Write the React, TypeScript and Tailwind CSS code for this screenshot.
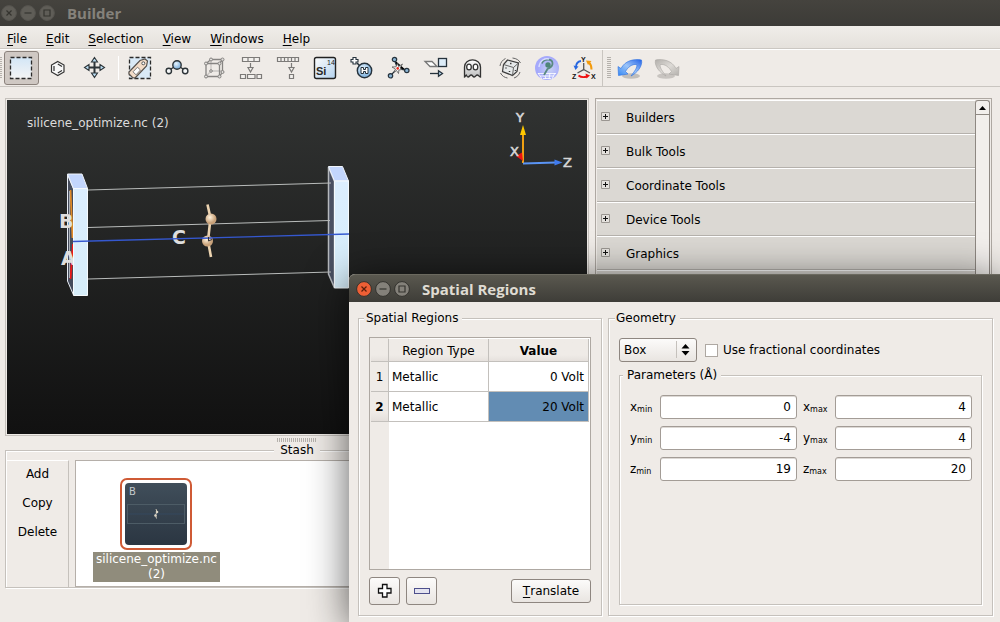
import React from 'react'

type ToolItem = {
    name: string
    icon: React.ReactNode
    active?: boolean
}

type RegionRow = {
    type: string
    value: string
    selected?: boolean
}

const menus = ['File', 'Edit', 'Selection', 'View', 'Windows', 'Help']

const panels = ['Builders', 'Bulk Tools', 'Coordinate Tools', 'Device Tools', 'Graphics', 'Miscellaneous']

const regions: RegionRow[] = [
    { type: 'Metallic', value: '0 Volt' },
    { type: 'Metallic', value: '20 Volt', selected: true },
]

const parameters = [
    { axis: 'x', min: '0', max: '4' },
    { axis: 'y', min: '-4', max: '4' },
    { axis: 'z', min: '19', max: '20' },
]

const selectTools: ToolItem[] = [
    {
        name: 'Rectangle select',
        active: true,
        icon: <rect x="2.500" y="2.500" width="21" height="21" fill="url(#paper)" stroke="#2a2a2a" strokeWidth="1.300" strokeDasharray="4 2" />,
    },
    {
        name: 'Ring select',
        icon: <g fill="none" stroke="#333" strokeWidth="1.200">
            <path d="M12.800 6.500 L19 10 V17 L12.800 20.500 L6.500 17 V10 Z" fill="#f8f8f8" />
            <path d="M9 11 V16 M12.800 9 L17 11.400 M12.800 18 L17 15.600" />
        </g>,
    },
    {
        name: 'Move',
        icon: <g stroke="#2d3438" strokeWidth="1.400" fill="#b9dcf2">
            <path d="M5 12.500 H21 M12.500 5 V21" strokeWidth="2" />
            <path d="M12.500 2.500 L15.500 7 H9.500 Z M12.500 22.500 L15.500 18 H9.500 Z M2.500 12.500 L7 9.500 V15.500 Z M22.500 12.500 L18 9.500 V15.500 Z" strokeWidth="1.100" />
        </g>,
    },
]

const editTools: ToolItem[] = [
    {
        name: 'Tag selection',
        icon: <g>
            <rect x="2.500" y="2.500" width="21" height="21" fill="#d9e9f6" stroke="#2a2a2a" strokeWidth="1.300" strokeDasharray="4 2" />
            <path d="M2 17 L13 5.500 L18 4 L20.500 6 L19.500 11 L8 23 L5.500 22.500 L2 19 Z" fill="#f3dcc8" stroke="#55504c" strokeWidth="1.200" />
            <path d="M6 16.800 L10.500 12.200 L13.500 15 L9 19.800 Z" fill="#fff" stroke="#777" />
            <circle cx="16.300" cy="8.300" r="1.500" fill="#fff" stroke="#555" />
        </g>,
    },
    {
        name: 'Bond angle',
        icon: <g stroke="#2d3438" strokeWidth="1.400">
            <path d="M7 14 L10 12 M19 14 L16 12" />
            <circle cx="4.800" cy="16" r="2.700" fill="#f4f6f7" />
            <circle cx="21.200" cy="16" r="2.700" fill="#f4f6f7" />
            <circle cx="13" cy="10" r="4.200" fill="url(#ball)" />
        </g>,
    },
    {
        name: 'Unit cell',
        icon: <g stroke="#868482" strokeWidth="1.300" fill="none">
            <path d="M10 4.500 V16 H21.500 M10 16 L5 21.500" stroke="#c9c6c3" />
            <path d="M10 4.500 H21.500 V17 L18.500 21.500 H5 V8.500 L10 4.500 M5 8.500 H18.500 V21.500 M18.500 8.500 L21.500 4.500" />
            <g fill="#e2e0dd" strokeWidth="1">
                <circle cx="10" cy="4.500" r="1.500" />
                <circle cx="21.500" cy="4.500" r="1.500" />
                <circle cx="21.500" cy="17" r="1.500" />
                <circle cx="5" cy="8.500" r="1.500" />
                <circle cx="18.500" cy="8.500" r="1.500" />
                <circle cx="5" cy="21.500" r="1.500" />
                <circle cx="18.500" cy="21.500" r="1.500" />
                <circle cx="10" cy="16" r="1.300" />
            </g>
        </g>,
    },
    {
        name: 'Split bulk',
        icon: <path d="M4.500 2.500 H21.500 V6.500 H4.500 Z M10 2.500 V6.500 M16 2.500 V6.500 M2.500 19.500 H7.500 V23.500 H2.500 Z M9.500 19.500 H17 V23.500 H9.500 Z M19 19.500 H23.500 V23.500 H19 Z M12.500 8 V12.500 M10 12.500 H15 L12.500 17 Z" stroke="#7c7a78" strokeWidth="1.200" fill="#f2f0ed" />,
    },
    {
        name: 'Reduce cell',
        icon: <path d="M2.500 2.500 H23.500 V6.500 H2.500 Z M6 2.500 V6.500 M9.500 2.500 V6.500 M13 2.500 V6.500 M16.500 2.500 V6.500 M20 2.500 V6.500 M16.500 8 V12.500 M14 12.500 H19 L16.500 17 Z M14.500 19.500 H18.500 V23.500 H14.500 Z" stroke="#7c7a78" strokeWidth="1.200" fill="#f2f0ed" />,
    },
    {
        name: 'Element',
        icon: <g className="font-['Liberation_Sans',sans-serif]">
            <rect x="2.500" y="2.500" width="21" height="21" rx="2" fill="url(#tile)" stroke="#222" strokeWidth="1.400" />
            <text x="4" y="20" fontSize="11" fontWeight="700" fill="#2a2a2a">Si</text>
            <text x="15" y="10" fontSize="7" fill="#222">14</text>
        </g>,
    },
    {
        name: 'Add hydrogen',
        icon: <g stroke="#26323c">
            <path d="M8 8 L11 11" strokeWidth="1.600" />
            <circle cx="15.500" cy="15.500" r="7.200" fill="url(#ball)" strokeWidth="1.400" />
            <path d="M4 2.500 H7 V4.500 H9 V7 H7 V9 H4 V7 H2 V4.500 H4 Z" fill="#fff" strokeWidth="1.100" />
            <path d="M12 12.500 H14.500 V14.500 H16.500 V12.500 H19 V18.500 H16.500 V16.500 H14.500 V18.500 H12 Z" fill="#fff" strokeWidth="1" />
        </g>,
    },
    {
        name: 'Fuse atoms',
        icon: <g stroke="#26323c">
            <path d="M8.500 5 L11.500 13.500 L20.500 15.500 M11.500 13.500 L4.500 20.500" strokeWidth="1.200" />
            <path d="M11.500 8.500 L12.600 11.500 L16.500 9 L14 13 L16 14.500 L12.900 15 L12.500 18.500 L10.600 15.500 L8 17 L9.500 14 L6 12 L10 11.800 Z" fill="#fff" stroke="#555" strokeWidth=".8" />
            <circle cx="11.700" cy="13.400" r="1.300" fill="#e8291c" stroke="none" />
            <circle cx="8.500" cy="4.500" r="2.200" fill="#8ab4d4" strokeWidth="1.200" />
            <circle cx="20.800" cy="15.500" r="2.200" fill="#8ab4d4" strokeWidth="1.200" />
            <circle cx="4.500" cy="20.800" r="2.200" fill="#8ab4d4" strokeWidth="1.200" />
        </g>,
    },
    {
        name: 'Transform cell',
        icon: <g stroke="#26323c" strokeWidth="1.300">
            <path d="M2 6.500 H9 L14 11.500 H7 Z" fill="#fff" stroke="#777" />
            <rect x="15.500" y="3.500" width="8" height="8" fill="#dcecf8" />
            <path d="M7 18.500 H16" />
            <path d="M15.500 15.700 L19.500 18.500 L15.500 21.300 Z" fill="#b9dcf2" />
        </g>,
    },
    {
        name: 'Ghost atoms',
        icon: <g stroke="#333" strokeWidth="1.300">
            <path d="M4.500 22 V12 C4.500 2.500 20.500 2.500 20.500 12 V22 C18.800 22 18.800 20 17.300 20 C15.800 20 15.800 22 14.200 22 C12.700 22 12.700 20 11.200 20 C9.600 20 9.600 22 8 22 C6.500 22 6.800 20 6.200 20 C5.300 20.500 5.500 22 4.500 22 Z" fill="url(#ghost)" />
            <ellipse cx="9" cy="12" rx="2.300" ry="2.900" fill="#fff" />
            <ellipse cx="15.500" cy="12" rx="2.300" ry="2.900" fill="#fff" />
        </g>,
    },
    {
        name: 'Rattle',
        icon: <g stroke="#3c3c3c" strokeWidth="1.200" fill="none">
            <path d="M10.500 5 L21.500 8 L20 16.500 L15.500 20.500 L5.500 16.500 L6.500 9.500 Z" fill="#e6e9ea" />
            <path d="M6.500 9.500 L16.500 12.500 L21.500 8 M16.500 12.500 L15.500 20.500" stroke="#666" strokeWidth="1" />
            <path d="M3 11 C3.500 7.500 5.500 5 8.500 3.500 M3.500 18 C5 21 7.500 22.500 10.500 23 M17 23 C20 22 22 20 23 17 M15.500 3 C19.500 3.500 22 5 23.500 8" stroke="#666" strokeWidth="1" />
            <path d="M9 12.500 v1 M12.500 16 v1 M18.500 15 v1 M13 8.500 h1.500" strokeWidth="1.500" />
        </g>,
    },
    {
        name: 'Symmetry',
        icon: <g>
            <circle cx="13" cy="13" r="12" fill="url(#lilac)" />
            <path d="M4 18.500 H22 M6 21 H20 M9 23.500 H17 M4 18 L8 24 M10 18 L12 24 M16 18 L15 24 M21 18 L18 24" stroke="#fff" strokeWidth=".8" />
            <path d="M8 8.500 C9 4 18 3 18.500 8 C19 12 15 13 13.500 14 L10 20" fill="none" stroke="#5b8a82" strokeWidth="1.800" />
            <circle cx="14" cy="10" r="2.700" fill="#4f8578" />
            <path d="M5 12 C6 5 11 3 15 4" fill="none" stroke="#d8dcff" strokeWidth="1.500" />
        </g>,
    },
    {
        name: 'Swap axes',
        icon: <g fill="none" strokeWidth="1.500">
            <path d="M12.700 8 V14.500 L6.500 18 M12.700 14.500 L19 18" stroke="#555" strokeWidth="1.300" />
            <path d="M10 6 C7 6.500 5 8.500 5 12" stroke="#2767e0" strokeWidth="1.800" />
            <path d="M2.500 10.500 L7.500 11.500 L4.500 15 Z" fill="#2767e0" />
            <path d="M20.500 14.500 C20.500 11 19.500 9 18 7.500" stroke="#f39a0b" strokeWidth="2" />
            <path d="M15 5.500 L20.500 6 L17 10 Z" fill="#f39a0b" />
            <path d="M7.500 20.500 C10 22.500 13 22.500 16 21.500" stroke="#ee1111" strokeWidth="1.900" />
            <path d="M14.500 18.500 L19 20.500 L15.500 23.500 Z" fill="#ee1111" />
            <g className="font-['Liberation_Sans',sans-serif]" fill="#111" fontSize="7" fontWeight="700">
                <text x="10" y="7">Y</text>
                <text x="1" y="24">Z</text>
                <text x="20" y="24">X</text>
            </g>
        </g>,
    },
]

const historyTools: ToolItem[] = [
    {
        name: 'Undo',
        icon: <g>
            <ellipse cx="14" cy="21" rx="9" ry="2.800" fill="#6d6a66" opacity=".35" />
            <path d="M1 11.500 L4 13.500 C8 6 16 3.500 24.500 5 C26 11 20 18 14 21 C17 17 21 12 19.500 9.500 C15 9 11 12 8.500 16.500 L11 19 L1.500 20.500 Z" fill="url(#undo)" stroke="#2a6fe0" strokeWidth=".6" />
        </g>,
    },
    {
        name: 'Redo',
        icon: <g>
            <ellipse cx="12" cy="21" rx="9" ry="2.800" fill="#6d6a66" opacity=".3" />
            <path d="M25 11.500 L22 13.500 C18 6 10 3.500 1.500 5 C0 11 6 18 12 21 C9 17 5 12 6.500 9.500 C11 9 15 12 17.500 16.500 L15 19 L24.500 20.500 Z" fill="url(#redo)" stroke="#a9a6a2" strokeWidth=".6" />
        </g>,
    },
]

function Gradients() {
    return (
        <svg className="absolute h-0 w-0" aria-hidden="true">
            <defs>
                <linearGradient id="paper" x1="0" y1="0" x2="0" y2="1"><stop stopColor="#d3e6f6" /><stop offset="1" stopColor="#f4f4f4" /></linearGradient>
                <linearGradient id="tile" x1="0" y1="0" x2="1" y2="1"><stop stopColor="#fdfdfd" /><stop offset="1" stopColor="#b4d2ee" /></linearGradient>
                <linearGradient id="ghost" x1="0" y1="0" x2="0" y2="1"><stop stopColor="#fff" /><stop offset="1" stopColor="#bdbdbd" /></linearGradient>
                <linearGradient id="undo" x1="1" y1="0" x2="0" y2="1"><stop stopColor="#2463e8" /><stop offset=".5" stopColor="#9cc4f8" /><stop offset="1" stopColor="#2f86f5" /></linearGradient>
                <linearGradient id="redo" x1="0" y1="0" x2="1" y2="1"><stop stopColor="#b2afab" /><stop offset=".5" stopColor="#dddad6" /><stop offset="1" stopColor="#b2afab" /></linearGradient>
                <radialGradient id="ball" cx=".4" cy=".35"><stop stopColor="#e8f4fd" /><stop offset="1" stopColor="#8ebbe2" /></radialGradient>
                <radialGradient id="lilac" cx=".6" cy=".55"><stop stopColor="#c9d3f4" /><stop offset="1" stopColor="#a5a9fb" /></radialGradient>
                <radialGradient id="atom" cx=".4" cy=".35"><stop stopColor="#fff3dd" /><stop offset="1" stopColor="#c9a27a" /></radialGradient>
                <linearGradient id="slab" x1="0" y1="0" x2="0" y2="1"><stop stopColor="#dceeff" /><stop offset="1" stopColor="#d6edf9" /></linearGradient>
            </defs>
        </svg>
    )
}

function WindowButtons({ focused }: { focused?: boolean }) {
    const glyphs = ['M-2.5 -2.5 L2.5 2.5 M2.5 -2.5 L-2.5 2.5', 'M-3.5 0 H3.5', 'M-3 -3 H3 V3 H-3 Z']
    return (
        <div className="flex gap-[3px]">
            {glyphs.map((d, i) => {
                const hot = focused && i === 0
                return (
                    <button key={d} aria-label={['Close', 'Minimize', 'Maximize'][i]} className="h-4 w-4">
                        <svg viewBox="-8 -8 16 16" className="h-4 w-4">
                            <circle r="7.400" fill={hot ? '#ee5f35' : focused ? '#84817a' : '#5f5d57'} stroke={focused ? '#33322e' : '#55534e'} strokeWidth="1" />
                            <path d={d} fill="none" stroke={hot ? '#5a1f0c' : '#35342f'} strokeWidth="1.200" />
                        </svg>
                    </button>
                )
            })}
        </div>
    )
}

function ToolGroup({ tools }: { tools: ToolItem[] }) {
    return (
        <div className="flex gap-[2px]">
            {tools.map(tool => (
                <button
                    key={tool.name}
                    aria-label={tool.name}
                    className={tool.active
                        ? 'flex h-[34px] w-[35px] items-center justify-center rounded-[3px] border border-[#8b827c] bg-[#cfc8c3]'
                        : 'flex h-[34px] w-[35px] items-center justify-center'}
                >
                    <svg viewBox="0 0 27 26" className="h-[26px] w-[27px] shrink-0">{tool.icon}</svg>
                </button>
            ))}
        </div>
    )
}

function Scene() {
    return (
        <svg viewBox="7 100 580 334" preserveAspectRatio="xMinYMin meet" className="block h-full w-full">
            <text x="27" y="127" fontSize="12" fill="#dcdcdc">silicene_optimize.nc (2)</text>

            {/* left electrode */}
            <path d="M67.500 174.500 L73.500 189 V295 L67.500 281 Z" fill="#454c5c" stroke="#e8edf5" />
            <path d="M70.500 190 L72.500 238" stroke="#e08a28" strokeWidth="1.800" />
            <path d="M73 244 L70.500 279" stroke="#f01818" strokeWidth="1.800" />
            <path d="M69.500 191 V278" stroke="#aab0b8" strokeWidth="1" />

            <g fill="#dedede" fontWeight="700" fontSize="19">
                <text x="59" y="228">B</text>
                <text x="61" y="265">A</text>
                <text x="172" y="244">C</text>
            </g>
            <path d="M67.500 174 H82 L87.500 188.500 H73.500 Z" fill="#c3d6fd" stroke="#f1f5fb" />
            <path d="M73.500 188.500 H87.500 V295.500 H73.500 Z" fill="url(#slab)" stroke="#f6fafd" />

            {/* right electrode */}
            <path d="M328.500 167 L334.500 181.500 V288 L328.500 274 Z" fill="#4a5062" stroke="#b5b8bd" strokeWidth="1.500" />
            <path d="M328.500 166.500 H342.500 L348.500 181 H334.500 Z" fill="#c3d6fd" stroke="#f1f5fb" />
            <path d="M334.500 181 H348.500 V288 H334.500 Z" fill="url(#slab)" stroke="#f6fafd" />

            <g stroke="#b9bcbb" strokeWidth="1">
                <path d="M88 190 L331 183" />
                <path d="M88 227.500 L330 220.500" />
                <path d="M88 279 L331 272" />
            </g>
            <path d="M73 241.500 L349 234" stroke="#3558d0" strokeWidth="1.300" />

            <path d="M207.500 204.500 L210.500 218 L208 241 L211 257" fill="none" stroke="#ecd3b0" strokeWidth="2.600" />
            <circle cx="211" cy="219" r="5.500" fill="url(#atom)" />
            <circle cx="207.500" cy="241" r="5.500" fill="url(#atom)" />
            <path d="M202 238.300 L212 238" stroke="#3558d0" strokeWidth="1.400" />
            <path d="M208.500 237 V241 L212 239.500" stroke="#333" fill="none" />

            {/* orientation triad */}
            <path d="M523 163 V134" stroke="#f0a012" strokeWidth="2" />
            <path d="M520 135 L523 125 L526 135 Z" fill="#ffc800" />
            <path d="M523 163.500 L556 162.500" stroke="#5a94f4" strokeWidth="2" />
            <path d="M554.500 159.500 L562.500 162.500 L554.500 165.500 Z" fill="#3f7bef" />
            <path d="M516 156 L522 152.500 L523 161 Z" fill="#ee1212" />
            <g fill="#d6d6d6" stroke="#d6d6d6" strokeWidth=".6" fontSize="13">
                <text x="516" y="122">Y</text>
                <text x="510" y="156">X</text>
                <text x="563" y="167">Z</text>
            </g>
        </svg>
    )
}

function Stash() {
    return (
        <fieldset className="border border-[#c5c1bc] shadow-[inset_1px_1px_0_#fff,1px_1px_0_#fff]">
            <legend className="mx-auto bg-[#efebe7] px-[6px] leading-4">Stash</legend>
            <div className="flex h-[129px] gap-[6px] pl-px pt-[2px]">
                <div className="flex w-[62px] flex-col items-center gap-[3px] border-r border-t border-[#c5c1bc] border-t-white">
                    {['Add', 'Copy', 'Delete'].map(action => (
                        <button key={action} className="h-[26px] w-full">{action}</button>
                    ))}
                </div>
                <div className="flex flex-1 items-start border border-b-[#b5afa9] border-l-[#b5afa9] border-t-[#b5afa9] border-r-transparent bg-white pl-[17px] pt-[17px]">
                    <button className="flex w-[127px] flex-col items-start">
                        <span className="ml-[27px] flex h-[72px] w-[72px] items-center justify-center rounded-[7px] border-2 border-[#cf5a35]">
                            <svg viewBox="0 0 62 62" className="h-[62px] w-[62px] rounded-[4px] bg-linear-to-b from-[#404e5a] to-[#2b3642]">
                                <text x="4" y="12" fontSize="10" fill="#c3c8cc">B</text>
                                <rect x="2.500" y="21.500" width="57" height="19" fill="none" stroke="#4d5c66" />
                                <path d="M3 31 H59" stroke="#34485f" />
                                <path d="M31 26 L32 29 L30.500 32 L31.500 35.500" fill="none" stroke="#c9c3b4" />
                                <circle cx="32" cy="29" r="1.300" fill="#d9d3c4" />
                                <circle cx="30.500" cy="32.500" r="1.300" fill="#d9d3c4" />
                            </svg>
                        </span>
                        <span className="mt-[2px] w-full bg-[#908c7c] text-center leading-[15px] text-white">silicene_optimize.nc<br />(2)</span>
                    </button>
                </div>
            </div>
        </fieldset>
    )
}

function ToolPanels() {
    return (
        <aside className="flex w-[397px] overflow-hidden border border-[#aea8a2] p-px">
            <div className="flex-1">
                {panels.map(panel => (
                    <button key={panel} className="flex h-[34px] w-full items-center border-b border-t border-b-[#b5b1ac] border-t-white bg-[#dbd8d3] pl-1 pt-px text-left">
                        <svg viewBox="0 0 9 9" className="mb-[2px] h-[9px] w-[9px]">
                            <path d="M.5 .5 H8.500 V8.500 H.5 Z" fill="#e4e1dd" stroke="#9a9691" />
                            <path d="M2 4.500 H7 M4.500 2 V7" stroke="#111" />
                        </svg>
                        <span className="ml-4">{panel}</span>
                    </button>
                ))}
            </div>
            <div className="flex w-[15px] flex-col rounded-t-[3px] border-x border-t border-[#8e8882] bg-[#f2efec]">
                <button aria-label="Scroll up" className="flex h-[14px] items-center justify-center border-b border-[#8e8882]">
                    <svg viewBox="0 0 7 4" className="h-1 w-[7px]"><path d="M0 4 L3.500 0 L7 4 Z" /></svg>
                </button>
            </div>
        </aside>
    )
}

function RegionTable() {
    const edge = 'border-b border-r border-[#c3c0bc]'
    return (
        <div className="min-h-0 flex-1 border border-[#aea8a2] bg-[linear-gradient(to_right,#efebe7_19px,#fff_19px)] p-px">
            <table className="w-full table-fixed border-separate border-spacing-0">
                <colgroup>
                    <col className="w-[18px]" />
                    <col className="w-[100px]" />
                    <col className="w-[100px]" />
                    <col />
                </colgroup>
                <thead>
                    <tr className="h-[23px] bg-linear-to-b from-[#efebe7] from-70% to-[#e4dfdb]">
                        <td className={edge}></td>
                        <th className={`${edge} pt-[2px] font-normal`}>Region Type</th>
                        <th className={`${edge} pt-[2px] font-bold`}>Value</th>
                        <td className="border-b border-[#c3c0bc]"></td>
                    </tr>
                </thead>
                <tbody>
                    {regions.map((row, i) => (
                        <tr key={i} className="h-[30px]">
                            <th className={row.selected ? `${edge} bg-linear-to-b from-[#efebe7] from-70% to-[#e4dfdb] font-bold` : `${edge} bg-[#efebe7] font-normal`}>{i + 1}</th>
                            <td className={`${edge} bg-white pl-[3px]`}>{row.type}</td>
                            <td className={row.selected ? `${edge} bg-[#628cb3] pr-1 text-right` : `${edge} bg-white pr-1 text-right`}>{row.value}</td>
                            <td></td>
                        </tr>
                    ))}
                </tbody>
            </table>
        </div>
    )
}

function SpatialRegions() {
    const group = 'border border-[#c5c1bc] shadow-[inset_1px_1px_0_#fff,1px_1px_0_#fff]'
    const button = 'flex items-center justify-center rounded-[3px] border border-[#8e8680] bg-linear-to-b from-[#fcfbfa] to-[#e9e5e1]'
    const input = 'h-6 w-full min-w-0 rounded-[3px] border border-[#a39c96] bg-white pr-[5px] text-right shadow-[inset_0_1px_0_#ddd9d5]'
    return (
        <section className="absolute bottom-0 left-[349px] right-0 top-[274px] flex flex-col rounded-tl-[6px] bg-[#efebe7] shadow-[0_6px_40px_rgba(0,0,0,0.65)]">
            <header className="flex h-7 items-center gap-3 rounded-tl-[6px] border-t border-[#6b695f] bg-linear-to-b from-[#5a584f] to-[#3e3d38] pl-[7px]">
                <WindowButtons focused />
                <h2 className="font-['Open_Sans',sans-serif] text-[15px] font-bold text-[#dfdbd2]">Spatial Regions</h2>
            </header>
            <div className="flex flex-1 gap-[6px] px-[9px] pb-[6px] pr-[7px] pt-2">
                <fieldset className={`${group} flex w-[243px] flex-col px-[10px] pb-[10px] pt-[11px]`}>
                    <legend className="-ml-[5px] bg-[#efebe7] px-[2px] pr-1 leading-4">Spatial Regions</legend>
                    <RegionTable />
                    <div className="mt-[7px] flex items-center gap-[6px]">
                        <button aria-label="Add region" className={`${button} h-7 w-[31px]`}>
                            <svg viewBox="0 0 16 16" className="h-4 w-4">
                                <path d="M5.500 1.500 H10 V5.500 H14 V10 H10 V14 H5.500 V10 H1.500 V5.500 H5.500 Z" fill="#fff" stroke="#111" strokeWidth="1.300" />
                            </svg>
                        </button>
                        <button aria-label="Remove region" className={`${button} h-7 w-[31px]`}>
                            <svg viewBox="0 0 16 6" className="h-[6px] w-4">
                                <rect x=".5" y=".5" width="15" height="5" fill="#e4e4f0" stroke="#4d4f8c" />
                            </svg>
                        </button>
                        <button className={`${button} ml-auto h-6 w-20`}><span className="underline underline-offset-2">T</span>ranslate</button>
                    </div>
                </fieldset>

                <fieldset className={`${group} flex min-w-0 flex-1 flex-col px-[10px] pb-[10px] pt-3`}>
                    <legend className="-ml-1 bg-[#efebe7] pl-px pr-1 leading-4">Geometry</legend>
                    <div className="flex items-center">
                        <div className="relative">
                            <select aria-label="Shape" defaultValue="Box" className="block h-6 w-[78px] appearance-none rounded-[3px] border border-[#8e8680] bg-linear-to-b from-[#fcfbfa] to-[#e9e5e1] pl-1">
                                <option>Box</option>
                                <option>Sphere</option>
                            </select>
                            <svg viewBox="0 0 20 20" className="pointer-events-none absolute right-px top-[2px] h-5 w-5">
                                <path d="M.5 1 V18" stroke="#c5c1bc" />
                                <path d="M5.500 8.500 L9.500 4 L13.500 8.500 Z M5.500 11 L9.500 15.500 L13.500 11 Z" />
                            </svg>
                        </div>
                        <input id="fractional" type="checkbox" className="ml-2 h-[13px] w-[13px] appearance-none border border-[#aea8a2] bg-white checked:bg-[#628cb3]" />
                        <label htmlFor="fractional" className="ml-[5px]">Use fractional coordinates</label>
                    </div>
                    <fieldset className={`${group} mt-[5px] flex-1 pl-[10px] pr-[9px] pt-3`}>
                        <legend className="-ml-[7px] bg-[#efebe7] px-1 leading-4">Parameters (Å)</legend>
                        <div className="grid grid-cols-[24px_1fr_26px_1fr] items-center gap-x-[6px] gap-y-[7px]">
                            {parameters.map(({ axis, min, max }) => (
                                <React.Fragment key={axis}>
                                    <label htmlFor={`${axis}min`}>{axis}<span className="align-[-1px] text-[8px]">min</span></label>
                                    <input id={`${axis}min`} className={input} defaultValue={min} />
                                    <label htmlFor={`${axis}max`}>{axis}<span className="align-[-1px] text-[8px]">max</span></label>
                                    <input id={`${axis}max`} className={input} defaultValue={max} />
                                </React.Fragment>
                            ))}
                        </div>
                    </fieldset>
                </fieldset>
            </div>
        </section>
    )
}

function App() {
    return (
        <div className="relative flex min-h-screen flex-col overflow-hidden bg-[#efebe7] font-['DejaVu_Sans',sans-serif] text-xs text-black">
            <Gradients />
            <header className="flex h-[26px] items-center gap-3 bg-linear-to-b from-[#45433e] to-[#3c3b37] pl-px">
                <WindowButtons />
                <h1 className="font-['Open_Sans',sans-serif] text-[15px] font-bold text-[#85827b]">Builder</h1>
            </header>
            <nav className="flex h-[23px] items-center gap-[19px] border-b border-[#cbc7c2] bg-linear-to-b from-[#f0ede9] to-[#e5e1dc] px-[7px]">
                {menus.map(menu => (
                    <button key={menu} className="mt-[3px]"><span className="underline underline-offset-2">{menu[0]}</span>{menu.slice(1)}</button>
                ))}
            </nav>
            <div className="flex h-[38px] items-center border-b border-t border-b-[#c9c5c0] border-t-white">
                <div className="flex h-full items-center border-r border-[#c9c5c0]">
                    <div className="mr-[2px] h-[22px] w-[2px] bg-[repeating-linear-gradient(#b5b1ac_0_1px,transparent_1px_2px)]"></div>
                    <ToolGroup tools={selectTools} />
                    <div className="ml-[5px] mr-1 h-6 border-l border-white"></div>
                    <ToolGroup tools={editTools} />
                </div>
                <div className="ml-1 mr-[2px] h-[22px] w-1 bg-[repeating-linear-gradient(#b5b1ac_0_1px,transparent_1px_2px)]"></div>
                <ToolGroup tools={historyTools} />
            </div>

            <main className="flex flex-1 gap-[6px] pl-[5px] pr-2 pt-[11px]">
                <div className="flex min-w-0 flex-1 flex-col pb-[34px]">
                    <div className="flex-1 border border-[#c5c1bc] p-px">
                        <div className="h-full bg-linear-to-b from-[#313332] to-[#111111]">
                            <Scene />
                        </div>
                    </div>
                    <div className="mx-auto mt-[2px] h-1 w-10 bg-[repeating-linear-gradient(to_right,#b5b1ac_0_1px,transparent_1px_2px)]"></div>
                    <Stash />
                </div>
                <ToolPanels />
            </main>

            <SpatialRegions />
        </div>
    )
}

export default App
